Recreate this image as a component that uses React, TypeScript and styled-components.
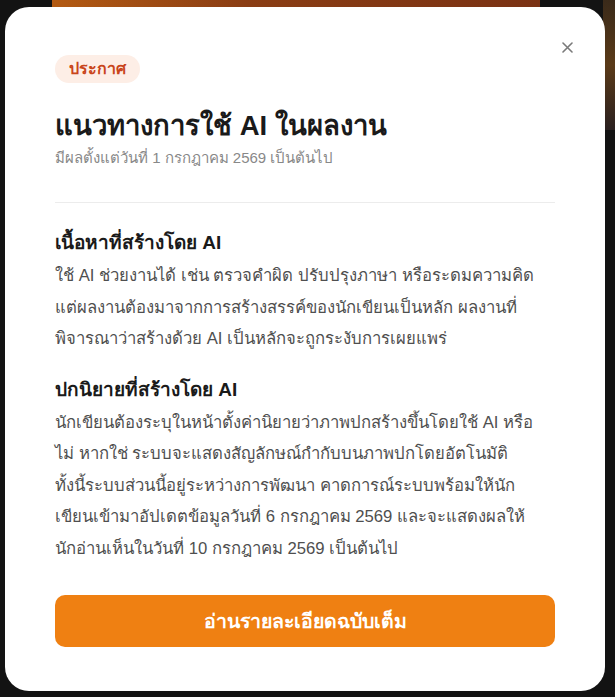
import styled, { createGlobalStyle } from 'styled-components';

const GlobalStyle = createGlobalStyle`
  html, body {
    margin: 0;
    padding: 0;
    background: #121212;
  }
  body {
    font-family: "Liberation Sans", "Noto Sans", "DejaVu Sans", sans-serif;
  }
`;

const Backdrop = styled.div`
  position: relative;
  width: 615px;
  height: 697px;
  overflow: hidden;
  background: #131313;
  display: flex;
  padding: 7px 0 0 5px;
  box-sizing: border-box;
`;

const PageBehind = styled.div`
  position: absolute;
  inset: 0;
  z-index: 0;
`;

const Banner = styled.div`
  position: absolute;
  top: 0;
  left: 52px;
  width: 488px;
  height: 10px;
  background: linear-gradient(90deg, #b35a12, #8a3d14 40%, #7a3214);
`;

const SideCard = styled.div`
  position: absolute;
  top: 0;
  right: 0;
  width: 12px;
  height: 130px;
  background: linear-gradient(180deg, #3a2a1a, #5a3a18 50%, #2a2020);
`;

const Modal = styled.div`
  position: relative;
  z-index: 1;
  width: 600px;
  height: 684px;
  background: #fff;
  border-radius: 24px;
  padding: 48px 50px 0;
  box-sizing: border-box;
  display: flex;
  flex-direction: column;
`;

const CloseButton = styled.button`
  position: absolute;
  top: 28px;
  right: 26px;
  width: 24px;
  height: 24px;
  border: none;
  background: none;
  padding: 0;
  color: #7a7a7a;
  display: flex;
  align-items: center;
  justify-content: center;
  cursor: pointer;
`;

const Badge = styled.span`
  align-self: flex-start;
  background: #fdeee6;
  color: #c9451b;
  font-size: 16px;
  font-weight: 700;
  padding: 3px 14px;
  border-radius: 14px;
  line-height: 22px;
`;

const Title = styled.h1`
  margin: 25px 0 0;
  font-size: 27.5px;
  font-weight: 700;
  color: #1a1a1a;
  line-height: 36px;
`;

const Subtitle = styled.p`
  margin: 3px 0 0;
  font-size: 15px;
  color: #888;
  line-height: 22px;
`;

const Divider = styled.hr`
  border: none;
  border-top: 1px solid #ececec;
  margin: 33px 0 0;
`;

const Section = styled.section<{ $first?: boolean }>`
  margin-top: ${({ $first }) => ($first ? '27px' : '22px')};
`;

const SectionHeading = styled.h2`
  margin: 0;
  font-size: 19px;
  font-weight: 700;
  color: #1a1a1a;
  line-height: 26px;
`;

const Body = styled.p`
  margin: 4px 0 0;
  font-size: 16.7px;
  color: #4f4f4f;
  line-height: 31.5px;
`;

const PrimaryButton = styled.button`
  margin-top: 31px;
  height: 52px;
  border: none;
  border-radius: 10px;
  background: #ef8012;
  color: #fff;
  font-family: inherit;
  font-size: 19.5px;
  font-weight: 700;
  cursor: pointer;
`;

const sections = [
  {
    heading: 'เนื้อหาที่สร้างโดย AI',
    lines: [
      'ใช้ AI ช่วยงานได้ เช่น ตรวจคำผิด ปรับปรุงภาษา หรือระดมความคิด',
      'แต่ผลงานต้องมาจากการสร้างสรรค์ของนักเขียนเป็นหลัก ผลงานที่',
      'พิจารณาว่าสร้างด้วย AI เป็นหลักจะถูกระงับการเผยแพร่',
    ],
  },
  {
    heading: 'ปกนิยายที่สร้างโดย AI',
    lines: [
      'นักเขียนต้องระบุในหน้าตั้งค่านิยายว่าภาพปกสร้างขึ้นโดยใช้ AI หรือ',
      'ไม่ หากใช่ ระบบจะแสดงสัญลักษณ์กำกับบนภาพปกโดยอัตโนมัติ',
      'ทั้งนี้ระบบส่วนนี้อยู่ระหว่างการพัฒนา คาดการณ์ระบบพร้อมให้นัก',
      'เขียนเข้ามาอัปเดตข้อมูลวันที่ 6 กรกฎาคม 2569 และจะแสดงผลให้',
      'นักอ่านเห็นในวันที่ 10 กรกฎาคม 2569 เป็นต้นไป',
    ],
  },
];

export default function App() {
  return (
    <>
      <GlobalStyle />
      <Backdrop>
        <PageBehind>
          <Banner />
          <SideCard />
        </PageBehind>
        <Modal>
          <CloseButton aria-label="ปิด">
            <svg width="11" height="11" viewBox="0 0 11 11">
              <path d="M1 1 L10 10 M10 1 L1 10" stroke="currentColor" strokeWidth="1.6" strokeLinecap="round" />
            </svg>
          </CloseButton>
          <Badge>ประกาศ</Badge>
          <Title>แนวทางการใช้ AI ในผลงาน</Title>
          <Subtitle>มีผลตั้งแต่วันที่ 1 กรกฎาคม 2569 เป็นต้นไป</Subtitle>
          <Divider />
          {sections.map((s, i) => (
            <Section key={s.heading} $first={i === 0}>
              <SectionHeading>{s.heading}</SectionHeading>
              <Body>
                {s.lines.map((line, j) => (
                  <span key={j}>
                    {line}
                    {j < s.lines.length - 1 && <br />}
                  </span>
                ))}
              </Body>
            </Section>
          ))}
          <PrimaryButton>อ่านรายละเอียดฉบับเต็ม</PrimaryButton>
        </Modal>
      </Backdrop>
    </>
  );
}
